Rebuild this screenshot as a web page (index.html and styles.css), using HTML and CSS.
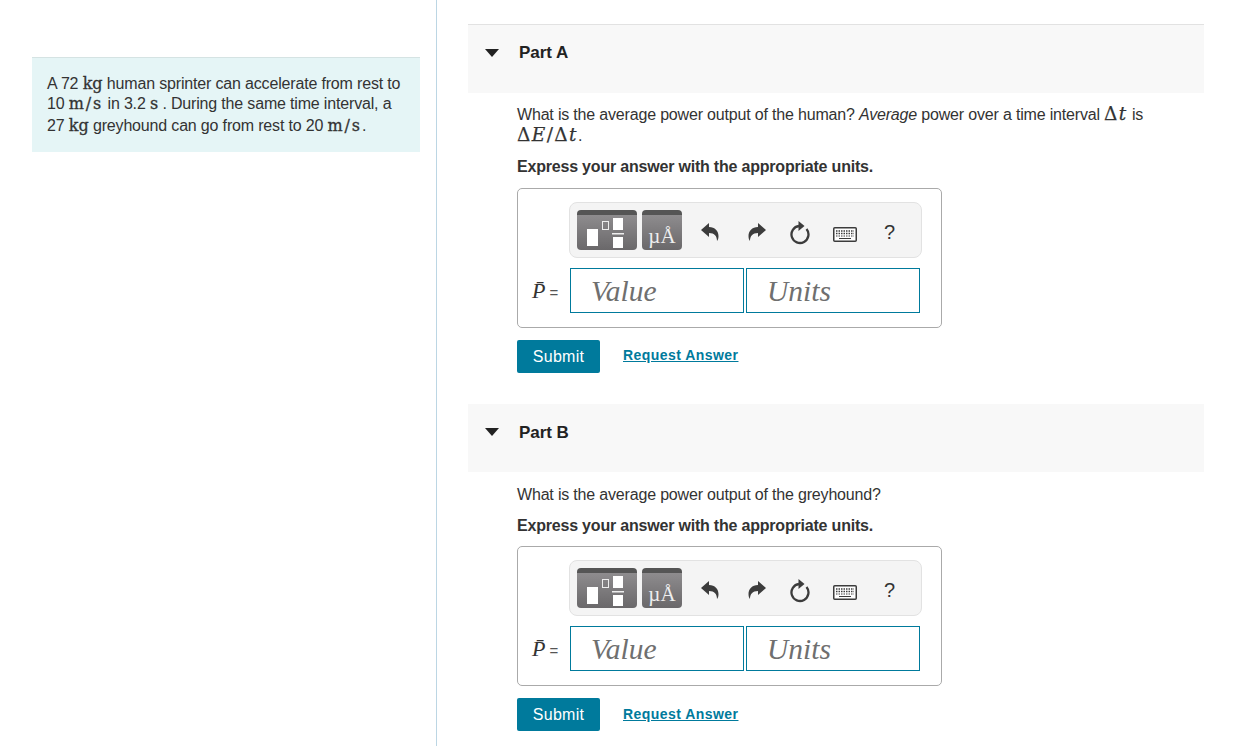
FILE: index.html
```html
<!DOCTYPE html>
<html lang="en">
<head>
    <meta charset="UTF-8">
    <title>Power output</title>
    <link rel="stylesheet" href="styles.css">
</head>
<body>
    <div class="page">
        <aside class="sidebar">
            <div class="intro">
                <div>A 72 <span class="unit">kg</span> human sprinter can accelerate from rest to</div>
                <div>10 <span class="unit wide">m/s</span> in 3.2 <span class="unit">s</span> . During the same time interval, a</div>
                <div class="intro-last">27 <span class="unit">kg</span> greyhound can go from rest to 20 <span class="unit wide">m/s</span>.</div>
            </div>
        </aside>
        <main class="content">
            <section class="part part-a">
                <div class="part-head">
                    <span class="caret"></span>
                    <h2>Part A</h2>
                </div>
                <div class="part-body">
                    <p class="question">What is the average power output of the human? <i>Average</i> power over a time interval <span class="math">Δ<i>t</i></span> is</p>
                    <p class="question-math"><span class="math">Δ<i>E</i>/Δ<i>t</i></span>.</p>
                    <p class="express">Express your answer with the appropriate units.</p>
                    <div class="answer-box">
                        <div class="toolbar">
                            <span class="tool tool-frac">
                                <svg width="68" height="40" viewBox="0 0 68 40"><rect x="18" y="19" width="11" height="17" fill="#fff"/><rect x="33.500" y="11.500" width="6" height="8" fill="none" stroke="#eee"/><rect x="44" y="8" width="10" height="12" fill="#fff"/><rect x="43" y="23" width="12" height="1.500" fill="#eee"/><rect x="44" y="27" width="10" height="11" fill="#fff"/></svg>
                            </span>
                            <span class="tool tool-units">µÅ</span>
                            <svg class="ico ico-undo" width="18" height="18" viewBox="0 0 18 18"><path d="M0 7 8 0v4c6 0 9.500 4 9.500 9 0 2-.5 4-1.500 5 0-5-2.500-8-8-8v4z" fill="#3c3c3c"/></svg>
                            <svg class="ico ico-redo" width="18" height="18" viewBox="0 0 18 18"><path d="M18 7 10 0v4C4 4 .5 8 .5 13c0 2 .5 4 1.500 5 0-5 2.500-8 8-8v4z" fill="#3c3c3c"/></svg>
                            <svg class="ico ico-reset" width="22" height="24" viewBox="0 0 22 24"><path d="M17.500 8A8.500 8.500 0 1 1 10 5" fill="none" stroke="#3c3c3c" stroke-width="2.300"/><path d="M9.500 0 15.500 5 9.500 10z" fill="#3c3c3c"/></svg>
                            <svg class="ico ico-keys" width="24" height="15" viewBox="0 0 24 15"><rect x=".75" y=".75" width="22.500" height="13.500" rx="1" fill="#fff" stroke="#3c3c3c" stroke-width="1.500"/><path d="M3 4h18M3 6.500h18" stroke="#3c3c3c" stroke-width="1.500" stroke-dasharray="1.500 1"/><path d="M3 9h18" stroke="#3c3c3c" stroke-dasharray="1.500 1"/><path d="M6 11.500h12" stroke="#3c3c3c"/></svg>
                            <span class="tool-help">?</span>
                        </div>
                        <div class="answer-row">
                            <span class="symbol"><i class="p-bar">P̄</i> =</span>
                            <span class="field">Value</span>
                            <span class="field field-units">Units</span>
                        </div>
                    </div>
                    <div class="actions">
                        <button class="submit">Submit</button>
                        <a class="request" href="#">Request Answer</a>
                    </div>
                </div>
            </section>
            <section class="part part-b">
                <div class="part-head">
                    <span class="caret"></span>
                    <h2>Part B</h2>
                </div>
                <div class="part-body">
                    <p class="question">What is the average power output of the greyhound?</p>
                    <p class="express">Express your answer with the appropriate units.</p>
                    <div class="answer-box">
                        <div class="toolbar">
                            <span class="tool tool-frac">
                                <svg width="68" height="40" viewBox="0 0 68 40"><rect x="18" y="19" width="11" height="17" fill="#fff"/><rect x="33.500" y="11.500" width="6" height="8" fill="none" stroke="#eee"/><rect x="44" y="8" width="10" height="12" fill="#fff"/><rect x="43" y="23" width="12" height="1.500" fill="#eee"/><rect x="44" y="27" width="10" height="11" fill="#fff"/></svg>
                            </span>
                            <span class="tool tool-units">µÅ</span>
                            <svg class="ico ico-undo" width="18" height="18" viewBox="0 0 18 18"><path d="M0 7 8 0v4c6 0 9.500 4 9.500 9 0 2-.5 4-1.500 5 0-5-2.500-8-8-8v4z" fill="#3c3c3c"/></svg>
                            <svg class="ico ico-redo" width="18" height="18" viewBox="0 0 18 18"><path d="M18 7 10 0v4C4 4 .5 8 .5 13c0 2 .5 4 1.500 5 0-5 2.500-8 8-8v4z" fill="#3c3c3c"/></svg>
                            <svg class="ico ico-reset" width="22" height="24" viewBox="0 0 22 24"><path d="M17.500 8A8.500 8.500 0 1 1 10 5" fill="none" stroke="#3c3c3c" stroke-width="2.300"/><path d="M9.500 0 15.500 5 9.500 10z" fill="#3c3c3c"/></svg>
                            <svg class="ico ico-keys" width="24" height="15" viewBox="0 0 24 15"><rect x=".75" y=".75" width="22.500" height="13.500" rx="1" fill="#fff" stroke="#3c3c3c" stroke-width="1.500"/><path d="M3 4h18M3 6.500h18" stroke="#3c3c3c" stroke-width="1.500" stroke-dasharray="1.500 1"/><path d="M3 9h18" stroke="#3c3c3c" stroke-dasharray="1.500 1"/><path d="M6 11.500h12" stroke="#3c3c3c"/></svg>
                            <span class="tool-help">?</span>
                        </div>
                        <div class="answer-row">
                            <span class="symbol"><i class="p-bar">P̄</i> =</span>
                            <span class="field">Value</span>
                            <span class="field field-units">Units</span>
                        </div>
                    </div>
                    <div class="actions">
                        <button class="submit">Submit</button>
                        <a class="request" href="#">Request Answer</a>
                    </div>
                </div>
            </section>
        </main>
    </div>
</body>
</html>
```

FILE: styles.css
```css
html, body {
    margin: 0;
    padding: 0;
    background-color: #fff;
}
body {
    font-family: "Liberation Sans", Arial, sans-serif;
    font-size: 16px;
    color: #333;
    letter-spacing: -0.18px;
    height: 746px;
    overflow: hidden;
}
.page {
    display: flex;
    height: 746px;
}
.sidebar {
    flex: none;
    width: 388px;
    border-right: 1px solid #bcd6e4;
    padding: 57px 16px 0 32px;
}
.intro {
    background-color: #e5f5f6;
    border-top: 1px solid #d5e3e3;
    padding: 16px 15px;
    height: 62px;
    line-height: 19.500px;
    letter-spacing: -0.17px;
}
.intro-last {
    margin-top: 3px;
}
.unit {
    font-family: "DejaVu Serif", serif;
    font-size: 16px;
    line-height: 16px;
    letter-spacing: 0;
    -webkit-text-stroke: 0.3px #333;
}
.unit.wide {
    letter-spacing: 1.9px;
}
.content {
    width: 736px;
    margin-left: 31px;
    padding-top: 24px;
}
.part-head {
    display: flex;
    background-color: #f8f8f8;
    height: 68px;
    box-sizing: border-box;
    padding: 18px 0 0 17px;
}
.part-a .part-head {
    border-top: 1px solid #e2e2e2;
    height: 69px;
}
.part-b .part-head h2 {
    margin-top: 1px;
}
.caret {
    width: 0;
    height: 0;
    margin-top: 6px;
    border-left: 7px solid transparent;
    border-right: 7px solid transparent;
    border-top: 8px solid #222;
}
.part-head h2 {
    margin: 0 0 0 20px;
    font-size: 17px;
    line-height: 20px;
    font-weight: bold;
    letter-spacing: -0.05px;
    color: #222;
}
.part-body {
    padding-left: 49px;
}
.question {
    margin: 0;
    padding-top: 12px;
    line-height: 19px;
    width: 670px;
}
.question-math {
    margin: 2px 0 0;
    line-height: 19px;
}
.math {
    font-family: "DejaVu Serif", serif;
    font-size: 18.500px;
    line-height: 16px;
    letter-spacing: 1.4px;
    -webkit-text-stroke: 0.25px #333;
}
.express {
    margin: 12px 0 0;
    font-weight: bold;
    line-height: 20px;
    letter-spacing: -0.2px;
}
.part-b .question {
    padding-top: 13px;
}
.answer-box {
    width: 423px;
    height: 138px;
    margin-top: 11px;
    border: 1px solid #aaa;
    border-radius: 5px;
}
.part-b .answer-box {
    margin-top: 10px;
}
.toolbar {
    display: flex;
    align-items: center;
    width: 351px;
    height: 54px;
    margin: 13px 0 0 51px;
    border: 1px solid #e2e2e2;
    border-radius: 8px;
    background-color: #f4f4f4;
}
.tool {
    display: block;
    height: 40px;
    box-sizing: border-box;
    border-radius: 4px;
    border-top: 5px solid #555;
    background: linear-gradient(#8e8c8e, #6a686a);
}
.tool-frac {
    width: 60px;
    margin-left: 7px;
}
.tool-frac svg {
    display: block;
    margin: -5px 0 0 -8px;
}
.tool-units {
    width: 40px;
    margin-left: 5px;
    font-family: "Liberation Serif", serif;
    font-size: 21px;
    line-height: 42px;
    text-align: center;
    color: #eee;
    letter-spacing: 0;
    overflow: hidden;
}
.ico {
    flex: none;
}
.ico-undo {
    margin: 3px 0 0 19px;
}
.ico-redo {
    margin: 3px 0 0 29px;
}
.ico-reset {
    margin: 6px 0 0 23px;
}
.ico-keys {
    margin: 8px 0 0 22px;
}
.tool-help {
    margin: 4px 0 0 27px;
    font-size: 20px;
    color: #333;
}
.answer-row {
    display: flex;
    align-items: center;
    margin-top: 10px;
    padding-left: 14px;
}
.symbol {
    width: 38px;
    padding-top: 1px;
    font-size: 15px;
    color: #555;
}
.p-bar {
    font-family: "Liberation Serif", serif;
    font-size: 22px;
    color: #333;
    letter-spacing: 0;
}
.field {
    width: 174px;
    height: 45px;
    box-sizing: border-box;
    border: 1px solid #007a9c;
    padding-left: 20px;
    font-family: "Liberation Serif", serif;
    font-style: italic;
    font-size: 29.500px;
    line-height: 44px;
    color: #6f6f6f;
    letter-spacing: 0;
}
.field-units {
    margin-left: 2px;
}
.actions {
    display: flex;
    align-items: center;
    margin-top: 12px;
}
.submit {
    width: 83px;
    height: 33px;
    border: none;
    border-radius: 2px;
    background-color: #007a9c;
    color: #fff;
    font-family: inherit;
    font-size: 16px;
    letter-spacing: 0.25px;
    padding: 0;
}
.request {
    margin: -3px 0 0 23px;
    font-size: 14px;
    font-weight: bold;
    letter-spacing: 0.45px;
    color: #007a9c;
}
.part-b .request {
    margin-top: -1px;
}
.part-a .part-body {
    height: 311px;
}
```
